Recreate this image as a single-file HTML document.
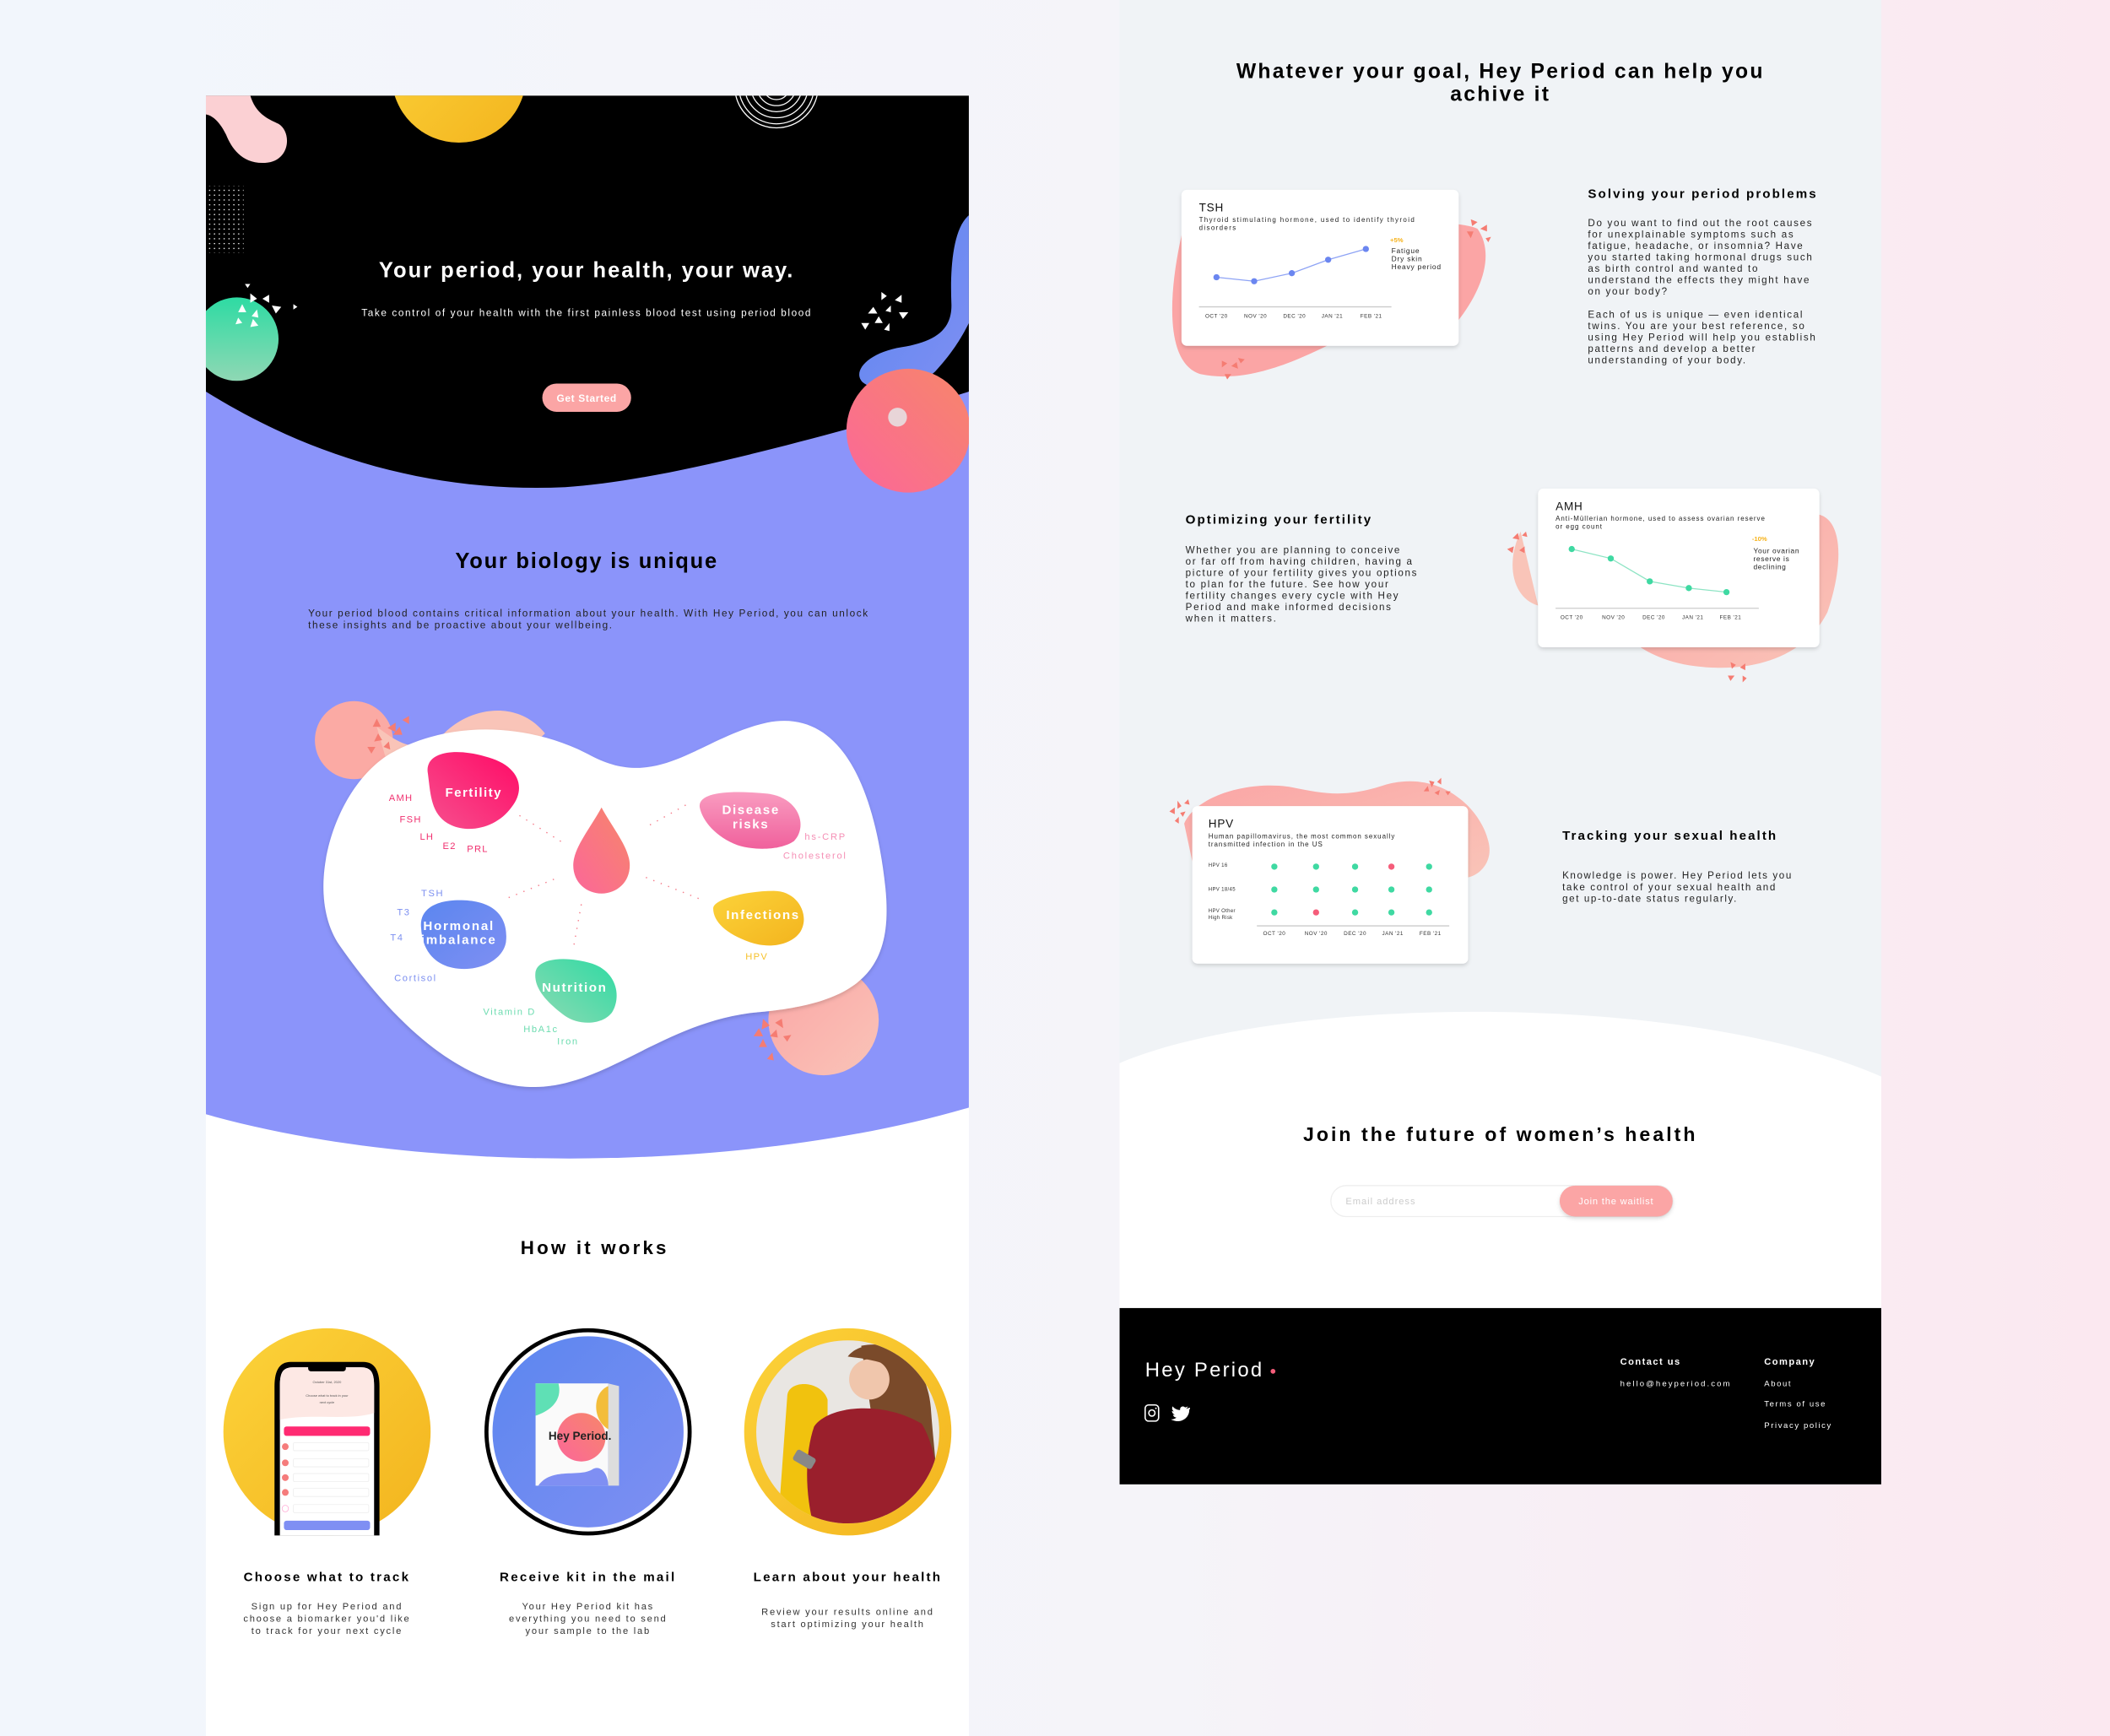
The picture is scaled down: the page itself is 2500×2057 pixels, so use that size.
<!DOCTYPE html>
<html><head><meta charset="utf-8">
<style>
html,body{margin:0;padding:0;width:2500px;height:2057px;overflow:hidden;background:linear-gradient(90deg,#f2f6fc 0%,#f5f4f9 55%,#fbe8f0 100%);}
svg{display:block}
text{font-family:"Liberation Sans",sans-serif;}
.b{letter-spacing:1.1px}
.s{letter-spacing:0.8px}
.xs{letter-spacing:0.35px}
</style></head><body>
<svg width="2500" height="2057" viewBox="0 0 1568 1290" preserveAspectRatio="none" xmlns="http://www.w3.org/2000/svg">
<defs>
<clipPath id="lp"><rect x="153" y="71" width="567" height="1219"/></clipPath>
<linearGradient id="gY" x1="0" y1="0" x2="1" y2="1"><stop offset="0" stop-color="#fcd33a"/><stop offset="1" stop-color="#f3b41e"/></linearGradient>
<linearGradient id="gG" x1="0" y1="0" x2="0" y2="1"><stop offset="0" stop-color="#2edba3"/><stop offset="1" stop-color="#8fd8b4"/></linearGradient>
<linearGradient id="gR" x1="1" y1="0" x2="0" y2="1"><stop offset="0" stop-color="#f7866a"/><stop offset="1" stop-color="#fb6799"/></linearGradient>
<linearGradient id="gB" x1="0" y1="0" x2="1" y2="1"><stop offset="0" stop-color="#5b86ef"/><stop offset="1" stop-color="#7f8ff3"/></linearGradient>
<linearGradient id="gP" x1="1" y1="0" x2="0" y2="1"><stop offset="0" stop-color="#ff0a66"/><stop offset="1" stop-color="#f6508e"/></linearGradient>
<linearGradient id="gD" x1="0" y1="0" x2="0" y2="1"><stop offset="0" stop-color="#f99cc0"/><stop offset="1" stop-color="#f0609c"/></linearGradient>
<linearGradient id="gN" x1="1" y1="0" x2="0" y2="1"><stop offset="0" stop-color="#2edba3"/><stop offset="1" stop-color="#8ed9b3"/></linearGradient>
<linearGradient id="gPe" x1="0" y1="0" x2="1" y2="1"><stop offset="0" stop-color="#fba5a5"/><stop offset="1" stop-color="#f9c4b8"/></linearGradient>
<pattern id="dots" width="3.6" height="3.6" patternUnits="userSpaceOnUse"><circle cx="1" cy="1" r="0.5" fill="#fff"/></pattern>
<filter id="sh" x="-10%" y="-10%" width="120%" height="130%"><feDropShadow dx="0" dy="1.5" stdDeviation="1.5" flood-color="#000" flood-opacity="0.15"/></filter>
<clipPath id="c3"><circle cx="630" cy="1064" r="68"/></clipPath>
</defs>

<!-- LEFT PANEL -->
<rect x="153" y="71" width="567" height="1219" fill="#fff"/>
<g clip-path="url(#lp)">
<path d="M153 250 H720 V823 C560 870 320 875 153 828 Z" fill="#8b94fa"/>
<path d="M153 71 H720 V291 L640 316 C560 338 480 358 420 362 C330 366 240 345 153 291 Z" fill="#000"/>
<path d="M153 71 H186 C190 84 198 88 207 92 C217 98 216 120 197 121 C180 122 172 110 168 100 C163 90 158 86 153 85 Z" fill="#fbd0d3"/>
<circle cx="341" cy="56" r="50" fill="url(#gY)"/>
<g fill="none" stroke="#fff" stroke-width="0.8">
<circle cx="577" cy="64" r="10"/><circle cx="577" cy="64" r="14.5"/><circle cx="577" cy="64" r="19"/><circle cx="577" cy="64" r="23.5"/><circle cx="577" cy="64" r="28"/><circle cx="577" cy="64" r="31"/>
</g>
<rect x="153" y="138" width="28" height="50" fill="url(#dots)"/>
<circle cx="176" cy="252" r="31" fill="url(#gG)"/>
<g fill="#fff">
<path d="M182 211 l4 0 l-2 3z"/><path d="M186 218 l0 7 l5 -3z"/><path d="M195 222 l5 -3 l0 6z"/><path d="M202 227 l7 1 l-4 5z"/><path d="M180 226 l-3 6 l6 0z"/><path d="M191 230 l-4 5 l5 1z"/><path d="M188 237 l-2 6 l6 -1z"/><path d="M218 226 l3 2 l-3 2z"/><path d="M177 236 l-2 5 l5 -1z"/>
<path d="M655 217 l0 6 l4 -3z"/><path d="M665 223 l5 -4 l0 6z"/><path d="M645 233 l4 -5 l3 5z"/><path d="M658 231 l4 -4 l0 5z"/><path d="M668 232 l7 0 l-4 5z"/><path d="M650 240 l3 -5 l3 5z"/><path d="M640 240 l6 0 l-3 5z"/><path d="M657 245 l4 -5 l0 6z"/>
</g>
<path d="M720 160 C708 170 706 200 707 225 C708 245 695 254 670 258 C645 262 633 276 641 284 C652 293 680 290 695 276 C708 262 715 250 720 240 Z" fill="url(#gB)"/>
<circle cx="675" cy="320" r="46" fill="url(#gR)"/>
<circle cx="667" cy="310" r="7" fill="#e8d5d8"/>
</g>
<text x="436" y="206" text-anchor="middle" fill="#fff" font-size="16" font-weight="700" letter-spacing="1.25">Your period, your health, your way.</text>
<text x="436" y="235" text-anchor="middle" fill="#fff" font-size="7.4" letter-spacing="1">Take control of your health with the first painless blood test using period blood</text>
<rect x="403" y="285" width="66" height="21" rx="10.5" fill="#fba5a5"/>
<text x="436" y="298.5" text-anchor="middle" fill="#fff" font-size="7.5" font-weight="700" letter-spacing="0.4">Get Started</text>

<text x="436" y="422" text-anchor="middle" fill="#000" font-size="16" font-weight="700" letter-spacing="1.1">Your biology is unique</text>
<text x="229" y="458" fill="#222" font-size="7.4" letter-spacing="1">Your period blood contains critical information about your health. With Hey Period, you can unlock</text>
<text x="229" y="467" fill="#222" font-size="7.4" letter-spacing="1">these insights and be proactive about your wellbeing.</text>

<!-- diagram -->
<g clip-path="url(#lp)">
<circle cx="263" cy="550" r="29" fill="#fbaaa4"/>
<path d="M280 540 C300 555 310 560 330 545 C350 525 385 520 405 545 L380 570 L290 575 Z" fill="#f9c4b8"/>
<g fill="#f57c72"><path d="M280 534 l3 6 l-6 0z"/><path d="M288 541 l6 -4 l0 7z"/><path d="M278 551 l6 -1 l-3 -5z"/><path d="M292 546 l5 -6 l2 6z"/><path d="M299 535 l5 -3 l0 6z"/><path d="M273 555 l6 0 l-3 5z"/><path d="M285 555 l4 -4 l1 6z"/></g>
<circle cx="612" cy="758" r="41" fill="url(#gPe)"/>
<path d="M290 560 C340 532 400 540 440 562 C490 588 520 548 570 537 C625 526 650 585 658 660 C664 720 640 745 565 752 C490 758 445 815 385 807 C330 800 282 745 252 702 C225 662 248 585 290 560 Z" fill="#fff" filter="url(#sh)"/>
<g fill="#f57c72"><path d="M567 757 l5 5 l-6 3z"/><path d="M576 760 l5 -3 l1 7z"/><path d="M560 770 l4 -6 l3 6z"/><path d="M572 770 l5 -5 l1 6z"/><path d="M582 770 l6 -1 l-3 5z"/><path d="M564 778 l3 -6 l3 6z"/><path d="M570 787 l4 -5 l1 6z"/></g>
</g>
<path d="M318 575 C315 560 335 555 360 562 C385 568 392 585 380 600 C370 614 350 620 335 613 C320 606 320 590 318 575 Z" fill="url(#gP)"/>
<text x="352" y="592" text-anchor="middle" fill="#fff" font-size="9.5" font-weight="700" letter-spacing="0.9">Fertility</text>
<g fill="#f0306f" font-size="7" letter-spacing="0.8"><text x="289" y="595">AMH</text><text x="297" y="611">FSH</text><text x="312" y="624">LH</text><text x="329" y="631">E2</text><text x="347" y="633">PRL</text></g>
<path d="M447 600 C455 615 468 630 468 643 C468 656 458 664 447 664 C436 664 426 656 426 643 C426 630 439 615 447 600 Z" fill="url(#gR)"/>
<path d="M520 600 C518 588 545 587 572 590 C595 594 600 615 590 625 C580 632 560 632 548 628 C532 622 522 610 520 600 Z" fill="url(#gD)"/>
<text x="558" y="605" text-anchor="middle" fill="#fff" font-size="9.5" font-weight="700" letter-spacing="1">Disease</text>
<text x="558" y="615.5" text-anchor="middle" fill="#fff" font-size="9.5" font-weight="700" letter-spacing="1">risks</text>
<g fill="#f58fb5" font-size="7" letter-spacing="1.1"><text x="598" y="624">hs-CRP</text><text x="582" y="638">Cholesterol</text></g>
<path d="M313 690 C311 675 325 668 345 669 C368 670 378 682 376 700 C374 712 360 720 345 720 C325 720 314 708 313 690 Z" fill="url(#gB)"/>
<text x="341" y="691" text-anchor="middle" fill="#fff" font-size="9.5" font-weight="700" letter-spacing="1.1">Hormonal</text>
<text x="341" y="701.5" text-anchor="middle" fill="#fff" font-size="9.5" font-weight="700" letter-spacing="1.1">imbalance</text>
<g fill="#7c8ff0" font-size="7" letter-spacing="1"><text x="313" y="666">TSH</text><text x="295" y="680">T3</text><text x="290" y="699">T4</text><text x="293" y="729">Cortisol</text></g>
<path d="M530 675 C530 668 555 662 575 662 C593 662 602 680 595 692 C588 703 570 705 557 700 C540 694 530 685 530 675 Z" fill="url(#gY)"/>
<text x="567" y="683" text-anchor="middle" fill="#fff" font-size="9.5" font-weight="700" letter-spacing="1">Infections</text>
<text x="554" y="713" fill="#f6c12a" font-size="7" letter-spacing="0.8">HPV</text>
<path d="M398 722 C400 712 420 710 440 716 C458 722 462 740 455 752 C448 762 430 762 420 755 C408 746 396 735 398 722 Z" fill="url(#gN)"/>
<text x="427" y="737" text-anchor="middle" fill="#fff" font-size="9.5" font-weight="700" letter-spacing="1">Nutrition</text>
<g fill="#6ddcb0" font-size="7" letter-spacing="1"><text x="359" y="754">Vitamin D</text><text x="389" y="767">HbA1c</text><text x="414" y="776">Iron</text></g>
<g stroke="#f57c8a" stroke-width="0.9" stroke-dasharray="0.9 5" fill="none">
<path d="M386 606 L418 626"/><path d="M483 613 L510 598"/><path d="M378 667 L415 652"/><path d="M432 672 L426 705"/><path d="M480 652 L520 668"/>
</g>

<!-- how it works -->
<text x="442" y="932" text-anchor="middle" fill="#000" font-size="14" font-weight="700" letter-spacing="2">How it works</text>
<circle cx="243" cy="1064" r="77" fill="url(#gY)"/>
<path d="M204 1030 C204 1018 208 1012 216 1012 H270 C278 1012 282 1018 282 1030 V1141 H204 Z" fill="#000"/>
<path d="M208 1030 C208 1020 210 1016 218 1016 H268 C276 1016 278 1020 278 1030 V1141 H208 Z" fill="#fff"/>
<path d="M208 1030 C208 1020 210 1016 218 1016 H268 C276 1016 278 1020 278 1030 V1050 C260 1056 230 1050 208 1055 Z" fill="#fde8e4"/>
<rect x="229" y="1014" width="28" height="5" rx="2" fill="#000"/>
<text x="243" y="1028" text-anchor="middle" font-size="2.5" fill="#555">October 31st, 2020</text>
<text x="243" y="1038" text-anchor="middle" font-size="2.5" fill="#555">Choose what to track in your</text>
<text x="243" y="1043" text-anchor="middle" font-size="2.5" fill="#555">next cycle</text>
<rect x="211" y="1060" width="64" height="7" rx="2" fill="#ff2a72"/>
<g fill="#f57c7c"><circle cx="212" cy="1075" r="2.5"/><circle cx="212" cy="1087" r="2.5"/><circle cx="212" cy="1098" r="2.5"/><circle cx="212" cy="1109" r="2.5"/></g>
<circle cx="212" cy="1121" r="2.4" fill="none" stroke="#f9c" stroke-width="0.4"/>
<g fill="#fff" stroke="#eee" stroke-width="0.5"><rect x="218" y="1072" width="56" height="6" rx="1"/><rect x="218" y="1084" width="56" height="6" rx="1"/><rect x="218" y="1095" width="56" height="6" rx="1"/><rect x="218" y="1106" width="56" height="6" rx="1"/><rect x="218" y="1118" width="56" height="6" rx="1"/></g>
<rect x="211" y="1130" width="64" height="7" rx="2" fill="#7f8ff3"/>
<circle cx="437" cy="1064" r="77" fill="#000"/>
<circle cx="437" cy="1064" r="74" fill="#fff"/>
<circle cx="437" cy="1064" r="71" fill="url(#gB)"/>
<rect x="398" y="1028" width="54" height="76" fill="#fafafa"/>
<path d="M452 1028 L460 1030 V1104 L452 1104 Z" fill="#ddd"/>
<path d="M398 1028 H415 C418 1040 410 1048 398 1052 Z" fill="#5fe0b5"/>
<path d="M452 1030 C440 1035 440 1055 452 1062 Z" fill="#f3bd3a"/>
<circle cx="432" cy="1068" r="18" fill="url(#gR)"/>
<path d="M400 1104 C410 1090 430 1098 440 1092 C446 1088 452 1095 452 1104 Z" fill="#7f8ff3"/>
<text x="431" y="1070" text-anchor="middle" font-size="8.5" font-weight="700" fill="#222">Hey Period.</text>
<circle cx="630" cy="1064" r="77" fill="url(#gY)"/>
<g clip-path="url(#c3)">
<rect x="560" y="994" width="140" height="140" fill="#e9e6e2"/>
<path d="M585 1038 C585 1025 610 1025 615 1040 L615 1135 L578 1135 Z" fill="#f1c20e"/>
<path d="M640 1000 C665 995 690 1010 692 1050 C695 1090 700 1110 690 1135 L660 1135 Z" fill="#7a4a2a"/>
<circle cx="646" cy="1025" r="15" fill="#f0c6ac"/>
<path d="M630 1008 C640 995 665 998 668 1020 C660 1012 645 1010 630 1008 Z" fill="#7a4a2a"/>
<path d="M605 1060 C615 1045 655 1040 685 1058 C698 1080 700 1115 690 1135 L605 1135 C598 1110 598 1080 605 1060 Z" fill="#9a1f2c"/>
<rect x="590" y="1080" width="16" height="9" rx="2" transform="rotate(30 598 1084)" fill="#888"/>
</g>
<g text-anchor="middle" fill="#000" font-size="9.5" font-weight="700" letter-spacing="1.4">
<text x="243" y="1175">Choose what to track</text><text x="437" y="1175">Receive kit in the mail</text><text x="630" y="1175">Learn about your health</text></g>
<g text-anchor="middle" fill="#333" font-size="7" letter-spacing="1.1">
<text x="243" y="1196">Sign up for Hey Period and</text><text x="243" y="1205">choose a biomarker you'd like</text><text x="243" y="1214">to track for your next cycle</text>
<text x="437" y="1196">Your Hey Period kit has</text><text x="437" y="1205">everything you need to send</text><text x="437" y="1214">your sample to the lab</text>
<text x="630" y="1200">Review your results online and</text><text x="630" y="1209">start optimizing your health</text></g>

<!-- RIGHT PANEL -->
<rect x="832" y="0" width="566" height="1103" fill="#f0f3f6"/>
<path d="M832 790 C950 740 1250 735 1398 800 V972 H832 Z" fill="#fff"/>
<rect x="832" y="972" width="566" height="131" fill="#000"/>
<g text-anchor="middle" fill="#000" font-size="15.5" font-weight="700" letter-spacing="1.4"><text x="1115" y="58">Whatever your goal, Hey Period can help you</text><text x="1115" y="75">achive it</text></g>

<!-- TSH -->
<path d="M878 175 C868 220 866 270 892 278 C925 285 960 270 990 255 L1078 245 C1100 220 1112 190 1098 170 C1080 160 900 160 878 175 Z" fill="#fba5a5"/>
<g fill="#f57c72"><path d="M1093 163 l5 2 l-4 3z"/><path d="M1100 170 l5 -3 l0 5z"/><path d="M1090 172 l5 0 l-2 5z"/><path d="M1104 177 l4 -1 l-2 4z"/><path d="M908 268 l4 2 l-4 3z"/><path d="M915 272 l4 -3 l1 5z"/><path d="M910 278 l5 0 l-3 4z"/><path d="M920 266 l2 4 l3 -3z"/></g>
<rect x="878" y="141" width="206" height="116" rx="4" fill="#fff" filter="url(#sh)"/>
<text x="891" y="157" font-size="8.5" fill="#111" letter-spacing="0.5">TSH</text>
<text x="891" y="165" font-size="5" fill="#222" letter-spacing="0.85">Thyroid stimulating hormone, used to identify thyroid</text>
<text x="891" y="171" font-size="5" fill="#222" letter-spacing="0.85">disorders</text>
<polyline points="904,206 932,209 960,203 987,193 1015,185" fill="none" stroke="#8ea3f5" stroke-width="0.8"/>
<g fill="#6b86f0"><circle cx="904" cy="206" r="2.3"/><circle cx="932" cy="209" r="2.3"/><circle cx="960" cy="203" r="2.3"/><circle cx="987" cy="193" r="2.3"/><circle cx="1015" cy="185" r="2.3"/></g>
<line x1="891" y1="228" x2="1034" y2="228" stroke="#ccc" stroke-width="0.8"/>
<g font-size="4" fill="#333" text-anchor="middle" letter-spacing="0.3"><text x="904" y="236">OCT '20</text><text x="933" y="236">NOV '20</text><text x="962" y="236">DEC '20</text><text x="990" y="236">JAN '21</text><text x="1019" y="236">FEB '21</text></g>
<text x="1033" y="180" font-size="4.8" fill="#f6b21a" font-weight="700">+5%</text>
<g font-size="5.3" fill="#222" letter-spacing="0.5"><text x="1034" y="188">Fatigue</text><text x="1034" y="194">Dry skin</text><text x="1034" y="200">Heavy period</text></g>
<text x="1180" y="147" font-size="9.5" font-weight="700" fill="#000" letter-spacing="1.3">Solving your period problems</text>
<g font-size="7.3" fill="#222" letter-spacing="1.05"><text x="1180" y="168">Do you want to find out the root causes</text><text x="1180" y="176.5">for unexplainable symptoms such as</text><text x="1180" y="185">fatigue, headache, or insomnia? Have</text><text x="1180" y="193.5">you started taking hormonal drugs such</text><text x="1180" y="202">as birth control and wanted to</text><text x="1180" y="210.5">understand the effects they might have</text><text x="1180" y="219">on your body?</text>
<text x="1180" y="236">Each of us is unique — even identical</text><text x="1180" y="244.5">twins. You are your best reference, so</text><text x="1180" y="253">using Hey Period will help you establish</text><text x="1180" y="261.5">patterns and develop a better</text><text x="1180" y="270">understanding of your body.</text></g>

<!-- AMH -->
<path d="M1130 395 C1118 420 1125 445 1143 450 Z" fill="#f9c4b8"/>
<path d="M1350 382 C1370 385 1370 420 1358 455 C1340 490 1300 500 1260 495 C1235 492 1220 482 1215 478 L1350 470 Z" fill="url(#gPe)"/>
<g fill="#f57c72"><path d="M1124 400 l4 -4 l1 5z"/><path d="M1131 398 l3 -3 l1 4z"/><path d="M1120 408 l5 -2 l-1 5z"/><path d="M1129 409 l4 -3 l0 5z"/><path d="M1286 492 l4 2 l-3 3z"/><path d="M1293 496 l4 -3 l0 5z"/><path d="M1284 502 l5 0 l-3 4z"/><path d="M1295 502 l3 2 l-3 3z"/></g>
<rect x="1143" y="363" width="209" height="118" rx="4" fill="#fff" filter="url(#sh)"/>
<text x="1156" y="379" font-size="8.5" fill="#111" letter-spacing="0.5">AMH</text>
<text x="1156" y="387" font-size="5" fill="#222" letter-spacing="0.6">Anti-Müllerian hormone, used to assess ovarian reserve</text>
<text x="1156" y="393" font-size="5" fill="#222" letter-spacing="0.6">or egg count</text>
<polyline points="1168,408 1197,415 1226,432 1255,437 1283,440" fill="none" stroke="#8ee4c4" stroke-width="0.8"/>
<g fill="#3fd9a2"><circle cx="1168" cy="408" r="2.3"/><circle cx="1197" cy="415" r="2.3"/><circle cx="1226" cy="432" r="2.3"/><circle cx="1255" cy="437" r="2.3"/><circle cx="1283" cy="440" r="2.3"/></g>
<line x1="1156" y1="452" x2="1307" y2="452" stroke="#ccc" stroke-width="0.8"/>
<g font-size="4" fill="#333" text-anchor="middle" letter-spacing="0.3"><text x="1168" y="460">OCT '20</text><text x="1199" y="460">NOV '20</text><text x="1229" y="460">DEC '20</text><text x="1258" y="460">JAN '21</text><text x="1286" y="460">FEB '21</text></g>
<text x="1302" y="402" font-size="4.8" fill="#f6b21a" font-weight="700">-10%</text>
<g font-size="5.3" fill="#222" letter-spacing="0.4"><text x="1303" y="411">Your ovarian</text><text x="1303" y="417">reserve is</text><text x="1303" y="423">declining</text></g>
<text x="881" y="389" font-size="9.5" font-weight="700" fill="#000" letter-spacing="1.3">Optimizing your fertility</text>
<g font-size="7.3" fill="#222" letter-spacing="1.05"><text x="881" y="411">Whether you are planning to conceive</text><text x="881" y="419.5">or far off from having children, having a</text><text x="881" y="428">picture of your fertility gives you options</text><text x="881" y="436.5">to plan for the future.  See how your</text><text x="881" y="445">fertility changes every cycle with Hey</text><text x="881" y="453.5">Period and make informed decisions</text><text x="881" y="462">when it matters.</text></g>

<!-- HPV -->
<path d="M880 612 C890 590 930 580 960 585 C985 590 1000 593 1030 583 C1070 572 1100 600 1106 625 C1110 640 1100 650 1091 652 L886 640 Z" fill="url(#gPe)"/>
<g fill="#f57c72"><path d="M875 595 l3 4 l-3 2z"/><path d="M880 597 l3 -3 l1 4z"/><path d="M869 603 l4 -3 l0 5z"/><path d="M877 604 l4 -1 l-2 4z"/><path d="M873 610 l3 -3 l0 5z"/><path d="M1062 580 l2 5 l2 -4z"/><path d="M1068 581 l3 -3 l0 5z"/><path d="M1058 588 l3 -4 l1 4z"/><path d="M1066 589 l4 -2 l-1 4z"/><path d="M1074 588 l2 3 l2 -3z"/></g>
<rect x="886" y="599" width="205" height="117" rx="4" fill="#fff" filter="url(#sh)"/>
<text x="898" y="615" font-size="8.5" fill="#111" letter-spacing="0.5">HPV</text>
<text x="898" y="623" font-size="5" fill="#222" letter-spacing="0.6">Human papillomavirus, the most common sexually</text>
<text x="898" y="629" font-size="5" fill="#222" letter-spacing="0.6">transmitted infection in the US</text>
<g font-size="3.8" fill="#333" letter-spacing="0.2"><text x="898" y="644">HPV 16</text><text x="898" y="662">HPV 18/45</text><text x="898" y="678">HPV Other</text><text x="898" y="683">High Risk</text></g>
<g fill="#3fd9a2">
<circle cx="947" cy="644" r="2.3"/><circle cx="978" cy="644" r="2.3"/><circle cx="1007" cy="644" r="2.3"/><circle cx="1062" cy="644" r="2.3"/>
<circle cx="947" cy="661" r="2.3"/><circle cx="978" cy="661" r="2.3"/><circle cx="1007" cy="661" r="2.3"/><circle cx="1034" cy="661" r="2.3"/><circle cx="1062" cy="661" r="2.3"/>
<circle cx="947" cy="678" r="2.3"/><circle cx="1007" cy="678" r="2.3"/><circle cx="1034" cy="678" r="2.3"/><circle cx="1062" cy="678" r="2.3"/></g>
<g fill="#f55d7a"><circle cx="1034" cy="644" r="2.3"/><circle cx="978" cy="678" r="2.3"/></g>
<line x1="934" y1="688" x2="1077" y2="688" stroke="#ccc" stroke-width="0.8"/>
<g font-size="4" fill="#333" text-anchor="middle" letter-spacing="0.3"><text x="947" y="695">OCT '20</text><text x="978" y="695">NOV '20</text><text x="1007" y="695">DEC '20</text><text x="1035" y="695">JAN '21</text><text x="1063" y="695">FEB '21</text></g>
<text x="1161" y="624" font-size="9.5" font-weight="700" fill="#000" letter-spacing="1.3">Tracking your sexual health</text>
<g font-size="7.3" fill="#222" letter-spacing="1"><text x="1161" y="653">Knowledge is power. Hey Period lets you</text><text x="1161" y="661.5">take control of your sexual health and</text><text x="1161" y="670">get up-to-date status regularly.</text></g>

<!-- join -->
<text x="1115" y="848" text-anchor="middle" font-size="14.5" font-weight="700" fill="#000" letter-spacing="1.9">Join the future of women’s health</text>
<rect x="989" y="881" width="254" height="23" rx="11.5" fill="#fff" stroke="#eee" stroke-width="0.8"/>
<text x="1000" y="895" font-size="7" fill="#ccc" letter-spacing="0.6">Email address</text>
<rect x="1159" y="881" width="84" height="23" rx="11.5" fill="#fba5a5" filter="url(#sh)"/>
<text x="1201" y="895" text-anchor="middle" font-size="7" fill="#fff" letter-spacing="0.5">Join the waitlist</text>

<!-- footer -->
<text x="851" y="1023" font-size="15" fill="#fff" letter-spacing="1.4">Hey Period</text>
<circle cx="946" cy="1019" r="1.8" fill="#f55d7a"/>
<rect x="851" y="1044" width="10" height="12" rx="2.5" fill="none" stroke="#fff" stroke-width="1"/>
<circle cx="856" cy="1050" r="2.3" fill="none" stroke="#fff" stroke-width="1"/>
<circle cx="859" cy="1046.5" r="0.6" fill="#fff"/>
<path d="M884 1046 C883 1046.5 882 1046.8 881.3 1046.9 C882 1046.4 882.6 1045.8 882.8 1045 C882.1 1045.4 881.4 1045.7 880.6 1045.8 C879.2 1044.3 876.5 1045.5 877 1047.8 C874.4 1047.7 872.6 1046.5 871.4 1045 C870.6 1046.6 871.2 1048 872.3 1048.8 C871.8 1048.8 871.3 1048.6 870.9 1048.4 C870.9 1049.8 871.9 1050.9 873.1 1051.2 C872.6 1051.3 872.1 1051.4 871.6 1051.3 C872 1052.5 873.1 1053.3 874.3 1053.4 C873 1054.4 871.4 1054.8 870 1054.7 C876.8 1058.5 884 1054 883.8 1047.4 C884.3 1047 884.7 1046.5 884 1046 Z" fill="#fff"/>
<text x="1204" y="1014" font-size="7" font-weight="700" fill="#fff" letter-spacing="0.9">Contact us</text>
<text x="1204" y="1030" font-size="6" fill="#fff" letter-spacing="1.3">hello@heyperiod.com</text>
<text x="1311" y="1014" font-size="7" font-weight="700" fill="#fff" letter-spacing="0.9">Company</text>
<g font-size="6" fill="#fff" letter-spacing="1"><text x="1311" y="1030">About</text><text x="1311" y="1045">Terms of use</text><text x="1311" y="1061">Privacy policy</text></g>
</svg>
</body></html>
